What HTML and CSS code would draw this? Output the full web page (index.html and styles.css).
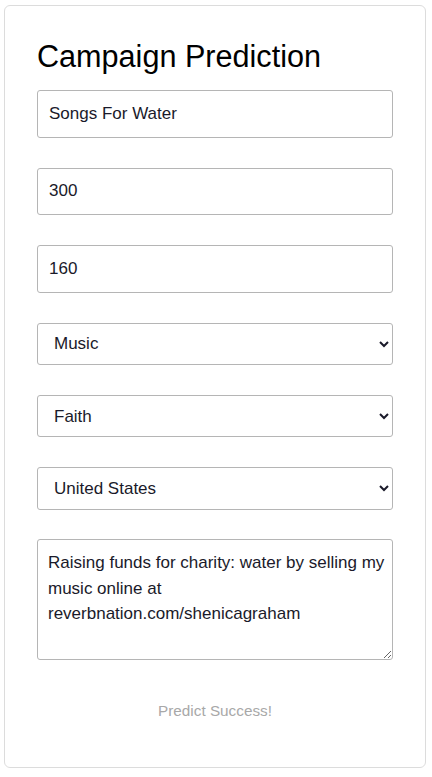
FILE: index.html
```html
<!DOCTYPE html>
<html>
<head>
<meta charset="utf-8">
<link rel="stylesheet" href="styles.css">
</head>
<body>
<div class="card">
  <h1 class="title">Campaign Prediction</h1>
  <form class="form">
    <input class="field" type="text" value="Songs For Water">
    <input class="field" type="text" value="300">
    <input class="field" type="text" value="160">
    <select class="choice"><option>Music</option></select>
    <select class="choice"><option>Faith</option></select>
    <select class="choice"><option>United States</option></select>
    <textarea class="blurb">Raising funds for charity: water by selling my music online at reverbnation.com/shenicagraham</textarea>
    <button class="submit" type="button" disabled>Predict Success!</button>
  </form>
</div>
</body>
</html>
```
FILE: styles.css
```css
html, body {
  margin: 0;
  padding: 0;
  background: #fff;
}
body {
  padding: 5px 6px 0 4px;
  font-family: "Liberation Sans", Arial, sans-serif;
}
.card {
  border: 1px solid #dcdcdc;
  border-radius: 6px;
  padding: 32.5px 32px 34px 32px;
}
.title {
  margin: 0 0 16.5px 0;
  font-size: 30.6px;
  font-weight: normal;
  color: #000;
  line-height: normal;
}
.form {
  display: flex;
  flex-direction: column;
  gap: 29.75px;
}
.field, .choice, .blurb {
  box-sizing: border-box;
  width: 100%;
  margin: 0;
  border: 1px solid #b5b5b5;
  border-radius: 3px;
  font-family: "Liberation Sans", Arial, sans-serif;
  font-size: 17px;
  color: #1a1a2a;
  background: #fff;
}
.field {
  height: 47.8px;
  padding: 0 11px;
}
.choice {
  height: 42.5px;
  padding: 0 12px;
}
.blurb {
  height: 121.1px;
  padding: 10px 4px 8px 10px;
  line-height: 25.5px;
  resize: vertical;
}
.submit {
  align-self: center;
  height: 42.5px;
  border: none;
  background: transparent;
  font-family: "Liberation Sans", Arial, sans-serif;
  font-size: 15.3px;
  color: #a8a8a8;
  padding: 0 12px;
}
```
